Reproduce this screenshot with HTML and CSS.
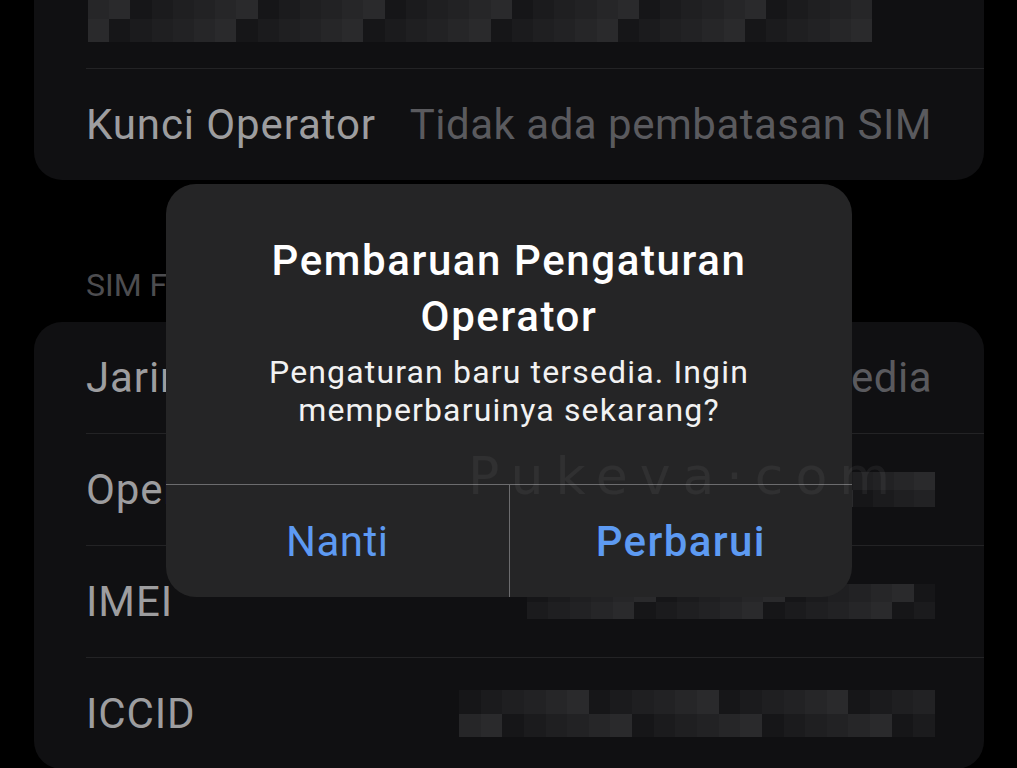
FILE: index.html
```html
<!DOCTYPE html>
<html lang="id">
<head>
    <meta charset="UTF-8">
    <meta name="viewport" content="width=device-width, initial-scale=1.0">
    <title>Pembaruan Pengaturan Operator</title>
    <link rel="stylesheet" href="styles.css">
</head>
<body>
    <div class="screen">
        <div class="group group-first">
            <div class="row">
                <div class="pixels pixels-top" data-cols="37" data-rows="2" data-seed="3"></div>
            </div>
            <div class="row">
                <span class="label">Kunci Operator</span>
                <span class="value">Tidak ada pembatasan SIM</span>
            </div>
        </div>

        <div class="section-title">SIM FISIK</div>

        <div class="group">
            <div class="row">
                <span class="label">Jaringan</span>
                <span class="value">Tidak tersedia</span>
            </div>
            <div class="row">
                <span class="label">Operator</span>
                <div class="pixels pixels-operator" data-cols="16" data-rows="2" data-seed="7"></div>
            </div>
            <div class="row">
                <span class="label">IMEI</span>
                <div class="pixels pixels-imei" data-cols="19" data-rows="2" data-seed="11"></div>
            </div>
            <div class="row">
                <span class="label">ICCID</span>
                <div class="pixels pixels-iccid" data-cols="22" data-rows="2" data-seed="5"></div>
            </div>
        </div>
    </div>

    <div class="alert">
        <div class="alert-body">
            <h2 class="alert-title">Pembaruan Pengaturan Operator</h2>
            <p class="alert-message">Pengaturan baru tersedia. Ingin memperbaruinya sekarang?</p>
        </div>
        <div class="alert-actions">
            <button class="alert-btn">Nanti</button>
            <button class="alert-btn alert-btn-main">Perbarui</button>
        </div>
    </div>

    <div class="watermark">Pukeva·com</div>

    <script>
        // sensor blok data (IMEI, ICCID, dll)
        const shades = ["#161618", "#1b1b1d", "#1f1f21", "#222224", "#262628", "#2a2a2c"];

        document.querySelectorAll(".pixels").forEach(block => {
            const cols = parseInt(block.dataset.cols);
            const rows = parseInt(block.dataset.rows);
            let seed = parseInt(block.dataset.seed);

            for (let i = 0; i < cols * rows; i++) {
                seed = (seed * 9301 + 49297) % 233280;
                const cell = document.createElement("span");
                cell.style.background = shades[seed % shades.length];
                block.appendChild(cell);
            }
            block.style.gridTemplateColumns = `repeat(${cols}, 1fr)`;
        });
    </script>
</body>
</html>
```

FILE: styles.css
```css
body {
    margin: 0;
    background-color: #000;
    font-family: Roboto, "Liberation Sans", sans-serif;
    width: 1017px;
    height: 768px;
    overflow: hidden;
    position: relative;
}

.screen {
    padding: 0 33px 0 34px;
}

.group {
    background-color: #101012;
    border-radius: 28px;
}

.group-first {
    margin-top: -43px;
}

.row {
    display: flex;
    align-items: center;
    justify-content: space-between;
    height: 111px;
    margin-left: 52px;
    padding-right: 52px;
}

.row + .row {
    border-top: 1px solid #232325;
}

.label {
    font-size: 42px;
    letter-spacing: 0.9px;
    color: #9d9d9f;
    white-space: nowrap;
}

.value {
    font-size: 42px;
    letter-spacing: 0.5px;
    color: #5a5a5e;
    white-space: nowrap;
}

.section-title {
    height: 142px;
    box-sizing: border-box;
    display: flex;
    align-items: flex-end;
    padding: 0 0 17px 52px;
    font-size: 32px;
    line-height: 40px;
    color: #4d4d50;
}

.pixels {
    display: grid;
}

.pixels-top {
    width: 784px;
    height: 46px;
    margin: 12px auto 0 2px;
}

.pixels-operator {
    width: 330px;
    height: 35px;
    margin-right: -3px;
}

.pixels-imei {
    width: 408px;
    height: 35px;
    margin-right: -3px;
}

.pixels-iccid {
    width: 476px;
    height: 47px;
    margin-right: -3px;
}

/* dialog */
.alert {
    position: absolute;
    left: 166px;
    top: 184px;
    width: 686px;
    height: 413px;
    background-color: #252526;
    border-radius: 30px;
    display: flex;
    flex-direction: column;
    overflow: hidden;
}

.alert-body {
    flex: 1;
    padding: 49px 50px 0;
    text-align: center;
}

.alert-title {
    margin: 0;
    font-size: 42px;
    line-height: 56px;
    font-weight: 500;
    letter-spacing: 1.6px;
    color: #fff;
}

.alert-message {
    margin: 8px 0 0;
    font-size: 32px;
    line-height: 38px;
    letter-spacing: 1.15px;
    color: #f2f2f2;
}

.alert-actions {
    display: flex;
    height: 112px;
    border-top: 1px solid #6c6c6e;
}

.alert-btn {
    flex: 1;
    background: none;
    border: none;
    font-family: inherit;
    font-size: 42px;
    letter-spacing: 0.5px;
    color: #5d9af2;
    padding: 0;
}

.alert-btn + .alert-btn {
    border-left: 1px solid #6c6c6e;
}

.alert-btn-main {
    font-weight: 500;
    letter-spacing: 1.4px;
}

.watermark {
    position: absolute;
    left: 468px;
    top: 446px;
    font-family: "DejaVu Sans", sans-serif;
    font-size: 52px;
    letter-spacing: 12px;
    color: rgba(255, 255, 255, 0.05);
    pointer-events: none;
}
```
